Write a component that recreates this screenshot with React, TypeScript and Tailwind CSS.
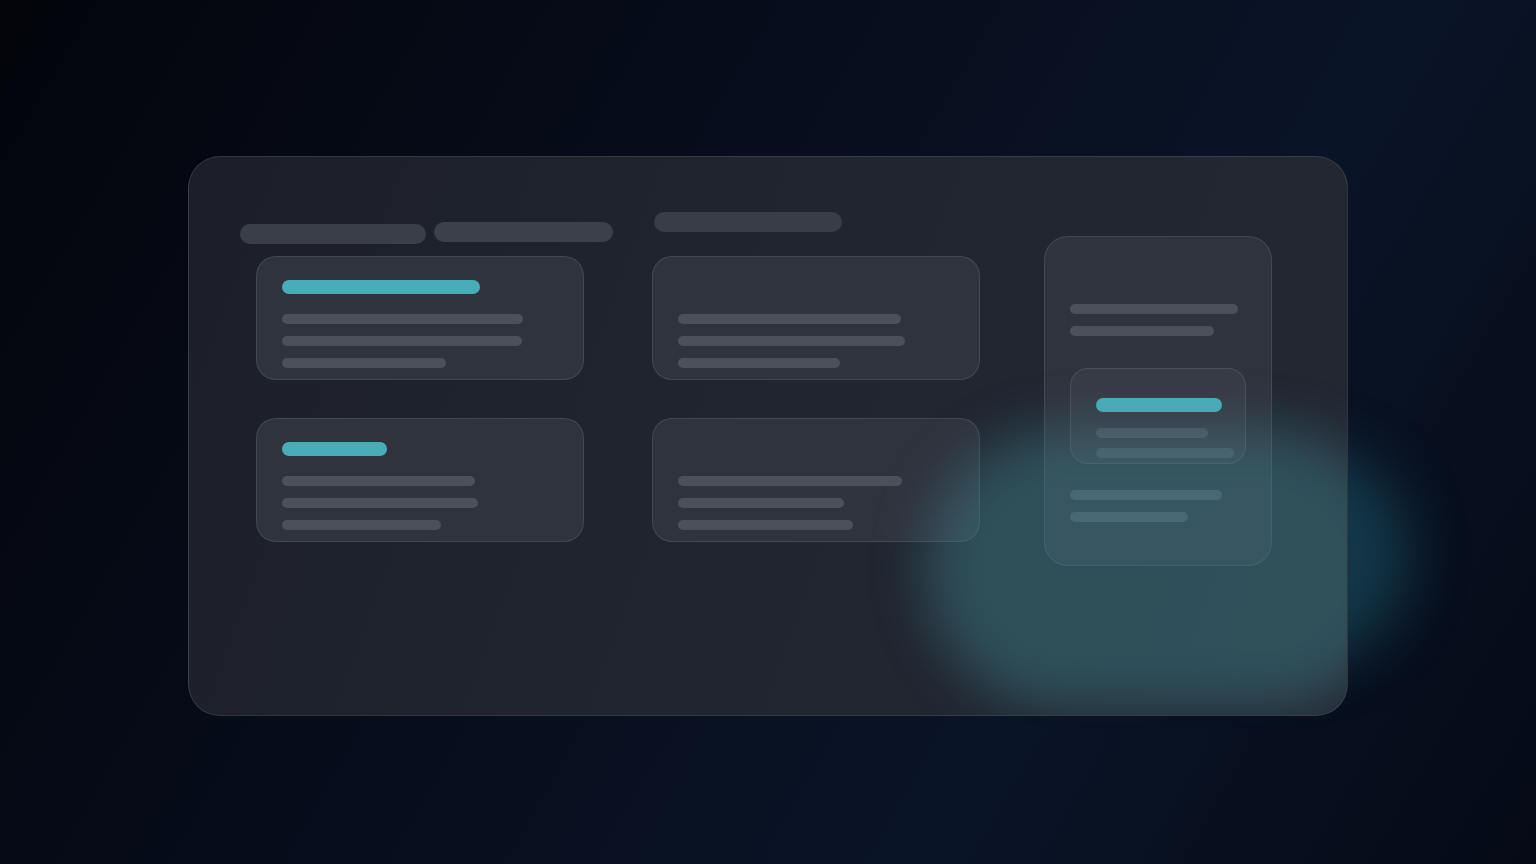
import React from "react";

const Line = ({ w }: { w: number }) => (
  <div className="h-[10px] rounded-full bg-[#4b505b]" style={{ width: w }} />
);

const Accent = ({ w }: { w: number }) => (
  <div className="h-[14px] rounded-full bg-[#49adb8]" style={{ width: w }} />
);

function Card({ accent, lines }: { accent?: number; lines: number[] }) {
  return (
    <div className="w-[328px] h-[124px] rounded-[20px] border border-white/10 bg-[#2f333e] pl-[25px] pt-[23px]">
      {accent ? <Accent w={accent} /> : <div className="h-[14px]" />}
      <div className="mt-[20px] flex flex-col gap-[12px]">
        {lines.map((w, i) => (
          <Line key={i} w={w} />
        ))}
      </div>
    </div>
  );
}

export default function App() {
  return (
    <div className="relative w-full h-[864px] overflow-hidden bg-[linear-gradient(120deg,#03050b_0%,#070d1c_40%,#0a1427_70%,#050a16_100%)] pt-[156px] font-['Inter',sans-serif]">
      {/* dim glow spilling past the panel edge */}
      <div className="pointer-events-none absolute left-[960px] top-[445px] w-[450px] h-[220px] rounded-full bg-[#20697a]/45 blur-[28px]" />

      <div className="relative z-10 mx-auto w-[1160px] h-[560px] overflow-hidden rounded-[32px] border border-white/10 bg-[linear-gradient(110deg,#1c1f29_0%,#20252f_50%,#232833_100%)] pl-[51px] pt-[55px] flex items-start">
        {/* left column */}
        <div className="w-[373px] mt-[10px]">
          <div className="flex items-start gap-[8px]">
            <div className="mt-[2px] w-[186px] h-[20px] rounded-full bg-[#3a3e49]" />
            <div className="w-[179px] h-[20px] rounded-full bg-[#3c404b]" />
          </div>
          <div className="ml-[16px] mt-[12px] flex flex-col gap-[38px]">
            <Card accent={198} lines={[241, 240, 164]} />
            <Card accent={105} lines={[193, 196, 159]} />
          </div>
        </div>

        {/* middle column */}
        <div className="ml-[39px]">
          <div className="ml-[2px] w-[188px] h-[20px] rounded-full bg-[#393d48]" />
          <div className="mt-[24px] flex flex-col gap-[38px]">
            <Card lines={[223, 227, 162]} />
            <Card lines={[224, 166, 175]} />
          </div>
        </div>

        {/* right column */}
        <div className="ml-[64px] mt-[24px] w-[228px] h-[330px] rounded-[24px] border border-white/10 bg-[#2f333e] pl-[25px] pt-[67px]">
          <div className="flex flex-col gap-[12px]">
            <Line w={168} />
            <Line w={144} />
          </div>
          <div className="mt-[32px] w-[176px] h-[96px] rounded-[18px] border border-white/10 bg-[#373b46] pl-[25px] pt-[29px]">
            <Accent w={126} />
            <div className="mt-[16px] flex flex-col gap-[10px]">
              <Line w={112} />
              <Line w={138} />
            </div>
          </div>
          <div className="mt-[26px] flex flex-col gap-[12px]">
            <Line w={152} />
            <Line w={118} />
          </div>
        </div>

        {/* teal glow over the glass */}
        <div className="pointer-events-none absolute left-[736px] top-[272px] w-[480px] h-[280px] rounded-full bg-[#448b97]/40 blur-[26px]" />
      </div>
    </div>
  );
}
